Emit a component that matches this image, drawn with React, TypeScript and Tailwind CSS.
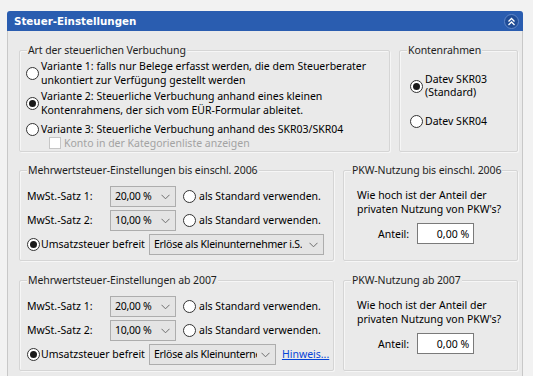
import type { ReactNode } from "react";

function Radio({ checked = false }: { checked?: boolean }) {
  return (
    <span className="flex h-[13px] w-[13px] shrink-0 items-center justify-center rounded-full border border-[#333] bg-white">
      {checked && <span className="h-[7px] w-[7px] rounded-full bg-[#1a1a1a]" />}
    </span>
  );
}

function Group({ title, className, children }: { title: string; className?: string; children: ReactNode }) {
  return (
    <div className={`relative rounded-[2px] border border-[#d5d5d5] shadow-[inset_1px_1px_0_#f6f6f6,1px_1px_0_#f6f6f6] ${className ?? ""}`}>
      <span className="absolute -top-[7px] left-[7px] bg-[#eaeaea] px-[1px] leading-[13px] tracking-[-0.1px] text-[#1e1e1e]">{title}</span>
      {children}
    </div>
  );
}

function Combo({ value, width }: { value: string; width: string }) {
  return (
    <div className={`flex h-[21px] items-center justify-between overflow-hidden border border-[#adadad] bg-[#e4e4e4] pl-[4px] pr-[5px] ${width}`}>
      <span className="overflow-hidden whitespace-nowrap tracking-[-0.25px]">{value}</span>
      <svg width="9" height="6" viewBox="0 0 9 6" className="ml-[4px] shrink-0">
        <path d="M0.5 0.8 L4.5 4.8 L8.5 0.8" fill="none" stroke="#6d6d6d" strokeWidth="1" />
      </svg>
    </div>
  );
}

function MwstGroup({ title, hint }: { title: string; hint?: boolean }) {
  return (
    <Group title={title} className="h-[91px] w-[315px]">
      <div className="flex flex-col gap-[3px] pl-[7px] pt-[15px]">
        {["MwSt.-Satz 1:", "MwSt.-Satz 2:"].map((label, i) => (
          <div key={label} className="flex h-[21px] items-center">
            <span className="w-[83px]">{label}</span>
            <Combo value={i === 0 ? "20,00 %" : "10,00 %"} width="w-[66px]" />
            <span className="ml-[7px] flex items-center gap-[3px]">
              <Radio />
              <span>als Standard verwenden.</span>
            </span>
          </div>
        ))}
        <div className="flex h-[21px] items-center">
          <Radio checked />
          <span className="ml-[1px] mr-[4px] whitespace-nowrap">Umsatzsteuer befreit</span>
          {hint ? (
            <>
              <Combo value="Erlöse als Kleinunternehmer i.S." width="w-[127px]" />
              <a className="ml-[6px] whitespace-nowrap text-[#0645d8] underline">Hinweis...</a>
            </>
          ) : (
            <Combo value="Erlöse als Kleinunternehmer i.S." width="w-[175px]" />
          )}
        </div>
      </div>
    </Group>
  );
}

function PkwGroup({ title }: { title: string }) {
  return (
    <Group title={title} className="h-[91px] flex-1">
      <div className="pl-[13px] pt-[17px] leading-[14px]">
        <p>Wie hoch ist der Anteil der</p>
        <p>privaten Nutzung von PKW's?</p>
        <div className="mt-[7px] flex items-center pl-[21px]">
          <span className="mr-[8px]">Anteil:</span>
          <div className="flex h-[21px] w-[57px] items-center justify-end border border-[#7a7a7a] bg-white pr-[4px]">0,00 %</div>
        </div>
      </div>
    </Group>
  );
}

export default function App() {
  return (
    <div className="h-[376px] w-[533px] overflow-hidden bg-[#f2f2f2] pl-[7px] pr-[10px] pt-[11px] font-['Noto_Sans',sans-serif] text-[10.5px] leading-[13px] text-black">
      <div className="flex h-[20px] items-center justify-between rounded-t-[3px] bg-[#2a5db0] pl-[7px] pr-[4px]">
        <span className="font-['DejaVu_Sans',sans-serif] text-[10.3px] font-bold text-white">Steuer-Einstellungen</span>
        <span className="flex h-[15px] w-[15px] items-center justify-center rounded-full border border-[#5f86c8] bg-[#1f4c97]">
          <svg width="9" height="9" viewBox="0 0 9 9">
            <path d="M1.5 4.5 L4.5 1.5 L7.5 4.5 M1.5 8 L4.5 5 L7.5 8" fill="none" stroke="white" strokeWidth="1.3" />
          </svg>
        </span>
      </div>
      <div className="h-[400px] border-x border-[#c8c8c8] bg-[#eaeaea] pl-[11px] pr-[4px] pt-[19px]">
        <div className="flex gap-[9px]">
          <Group title="Art der steuerlichen Verbuchung" className="h-[102px] w-[371px]">
            <div className="flex flex-col pl-[6px] pt-[8px] leading-[14px]">
              <div className="flex items-center gap-[2px]">
                <Radio />
                <span>
                  Variante 1: falls nur Belege erfasst werden, die dem Steuerberater
                  <br />
                  unkontiert zur Verfügung gestellt werden
                </span>
              </div>
              <div className="mt-[2px] flex items-center gap-[2px]">
                <Radio checked />
                <span>
                  Variante 2: Steuerliche Verbuchung anhand eines kleinen
                  <br />
                  Kontenrahmens, der sich vom EÜR-Formular ableitet.
                </span>
              </div>
              <div className="mt-[5px] flex items-center gap-[2px]">
                <Radio />
                <span>Variante 3: Steuerliche Verbuchung anhand des SKR03/SKR04</span>
              </div>
              <div className="flex items-center gap-[3px] pl-[23px] text-[#a3a3a3]">
                <span className="h-[12px] w-[12px] border border-[#c6c6c6] bg-white" />
                <span>Konto in der Kategorienliste anzeigen</span>
              </div>
            </div>
          </Group>
          <Group title="Kontenrahmen" className="h-[102px] flex-1">
            <div className="flex flex-col pl-[10px] pt-[22px]">
              <div className="flex items-center gap-[2px]">
                <Radio checked />
                <span>
                  Datev SKR03
                  <br />
                  (Standard)
                </span>
              </div>
              <div className="mt-[16px] flex items-center gap-[2px]">
                <Radio />
                <span>Datev SKR04</span>
              </div>
            </div>
          </Group>
        </div>
        <div className="mt-[18px] flex gap-[9px]">
          <MwstGroup title="Mehrwertsteuer-Einstellungen bis einschl. 2006" />
          <PkwGroup title="PKW-Nutzung bis einschl. 2006" />
        </div>
        <div className="mt-[19px] flex gap-[9px]">
          <MwstGroup title="Mehrwertsteuer-Einstellungen ab 2007" hint />
          <PkwGroup title="PKW-Nutzung ab 2007" />
        </div>
      </div>
    </div>
  );
}
